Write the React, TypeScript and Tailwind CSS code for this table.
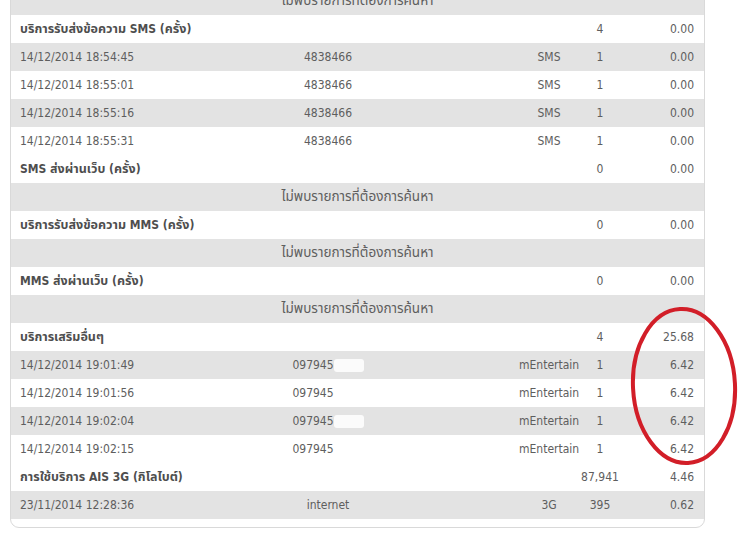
import React from "react";

type Row =
  | { kind: "header"; label: string; count: string; amount: string }
  | { kind: "empty" }
  | { kind: "item"; date: string; num: string; redact?: boolean; type: string; count: string; amount: string };

const rows: Row[] = [
  { kind: "empty" },
  { kind: "header", label: "บริการรับส่งข้อความ SMS (ครั้ง)", count: "4", amount: "0.00" },
  { kind: "item", date: "14/12/2014 18:54:45", num: "4838466", type: "SMS", count: "1", amount: "0.00" },
  { kind: "item", date: "14/12/2014 18:55:01", num: "4838466", type: "SMS", count: "1", amount: "0.00" },
  { kind: "item", date: "14/12/2014 18:55:16", num: "4838466", type: "SMS", count: "1", amount: "0.00" },
  { kind: "item", date: "14/12/2014 18:55:31", num: "4838466", type: "SMS", count: "1", amount: "0.00" },
  { kind: "header", label: "SMS ส่งผ่านเว็บ (ครั้ง)", count: "0", amount: "0.00" },
  { kind: "empty" },
  { kind: "header", label: "บริการรับส่งข้อความ MMS (ครั้ง)", count: "0", amount: "0.00" },
  { kind: "empty" },
  { kind: "header", label: "MMS ส่งผ่านเว็บ (ครั้ง)", count: "0", amount: "0.00" },
  { kind: "empty" },
  { kind: "header", label: "บริการเสริมอื่นๆ", count: "4", amount: "25.68" },
  { kind: "item", date: "14/12/2014 19:01:49", num: "097945", redact: true, type: "mEntertain", count: "1", amount: "6.42" },
  { kind: "item", date: "14/12/2014 19:01:56", num: "097945", redact: true, type: "mEntertain", count: "1", amount: "6.42" },
  { kind: "item", date: "14/12/2014 19:02:04", num: "097945", redact: true, type: "mEntertain", count: "1", amount: "6.42" },
  { kind: "item", date: "14/12/2014 19:02:15", num: "097945", redact: true, type: "mEntertain", count: "1", amount: "6.42" },
  { kind: "header", label: "การใช้บริการ AIS 3G (กิโลไบต์)", count: "87,941", amount: "4.46" },
  { kind: "item", date: "23/11/2014 12:28:36", num: "internet", type: "3G", count: "395", amount: "0.62" },
];

const font = {
  fontFamily:
    '"DejaVu Sans Condensed", "DejaVu Sans", "Noto Sans Thai", "Noto Sans", sans-serif',
};

// split text into Thai / non-Thai runs so Thai glyphs can be sized a bit larger
function Mixed({ text, bold }: { text: string; bold?: boolean }) {
  const parts = text.match(/[\u0E00-\u0E7F]+|[^\u0E00-\u0E7F]+/g) || [];
  return (
    <>
      {parts.map((p, i) =>
        /[\u0E00-\u0E7F]/.test(p) ? (
          <span key={i} className={bold ? "text-[12.5px]" : "text-[13.5px]"}>
            {p}
          </span>
        ) : (
          <span key={i}>{p}</span>
        )
      )}
    </>
  );
}

const grid = "grid grid-cols-[245px_144px_119px_60px_42px_83px] h-[28px] items-center";

export default function App() {
  let alt = 0;
  const bgs = rows.map((r) => {
    if (r.kind === "header") {
      alt = 0;
      return "bg-white";
    }
    const c = alt % 2 === 0 ? "bg-[#e3e3e3]" : "bg-white";
    alt++;
    return c;
  });

  return (
    <div className="w-[738px] h-[533px] overflow-hidden bg-white relative" style={font}>
      <div className="ml-[10px] mt-[-14px] w-[695px] border border-[#d9d9d9] rounded-b-[9px] pb-[8px] text-[12px] leading-none text-[#5e5e5e]">
        {rows.map((r, i) => {
          if (r.kind === "empty") {
            return (
              <div key={i} className={`h-[28px] flex items-center justify-center ${bgs[i]}`}>
                <Mixed text="ไม่พบรายการที่ต้องการค้นหา" />
              </div>
            );
          }
          if (r.kind === "header") {
            return (
              <div key={i} className={`${grid} ${bgs[i]}`}>
                <div className="col-span-3 pl-[9px] font-bold text-[#4e4e4e] whitespace-nowrap">
                  <Mixed text={r.label} bold />
                </div>
                <div></div>
                <div className="text-center whitespace-nowrap">{r.count}</div>
                <div className="text-right pr-[10px]">{r.amount}</div>
              </div>
            );
          }
          return (
            <div key={i} className={`${grid} ${bgs[i]}`}>
              <div className="pl-[9px] whitespace-nowrap">{r.date}</div>
              <div className="text-center whitespace-nowrap">
                {r.num}
                {r.redact && (
                  <span
                    className={`inline-block w-[30px] h-[13px] align-middle rounded-[3px] ${
                      bgs[i] === "bg-white" ? "bg-white" : "bg-[#fbfbfb]"
                    }`}
                  ></span>
                )}
              </div>
              <div></div>
              <div className="text-center whitespace-nowrap">{r.type}</div>
              <div className="text-center">{r.count}</div>
              <div className="text-right pr-[10px]">{r.amount}</div>
            </div>
          );
        })}
      </div>
      <svg className="absolute left-0 top-0" width="738" height="533" viewBox="0 0 738 533">
        <ellipse
          cx="684"
          cy="386"
          rx="51"
          ry="77"
          fill="none"
          stroke="#d21e28"
          strokeWidth="4"
          transform="rotate(-3 684 386)"
        />
      </svg>
    </div>
  );
}
